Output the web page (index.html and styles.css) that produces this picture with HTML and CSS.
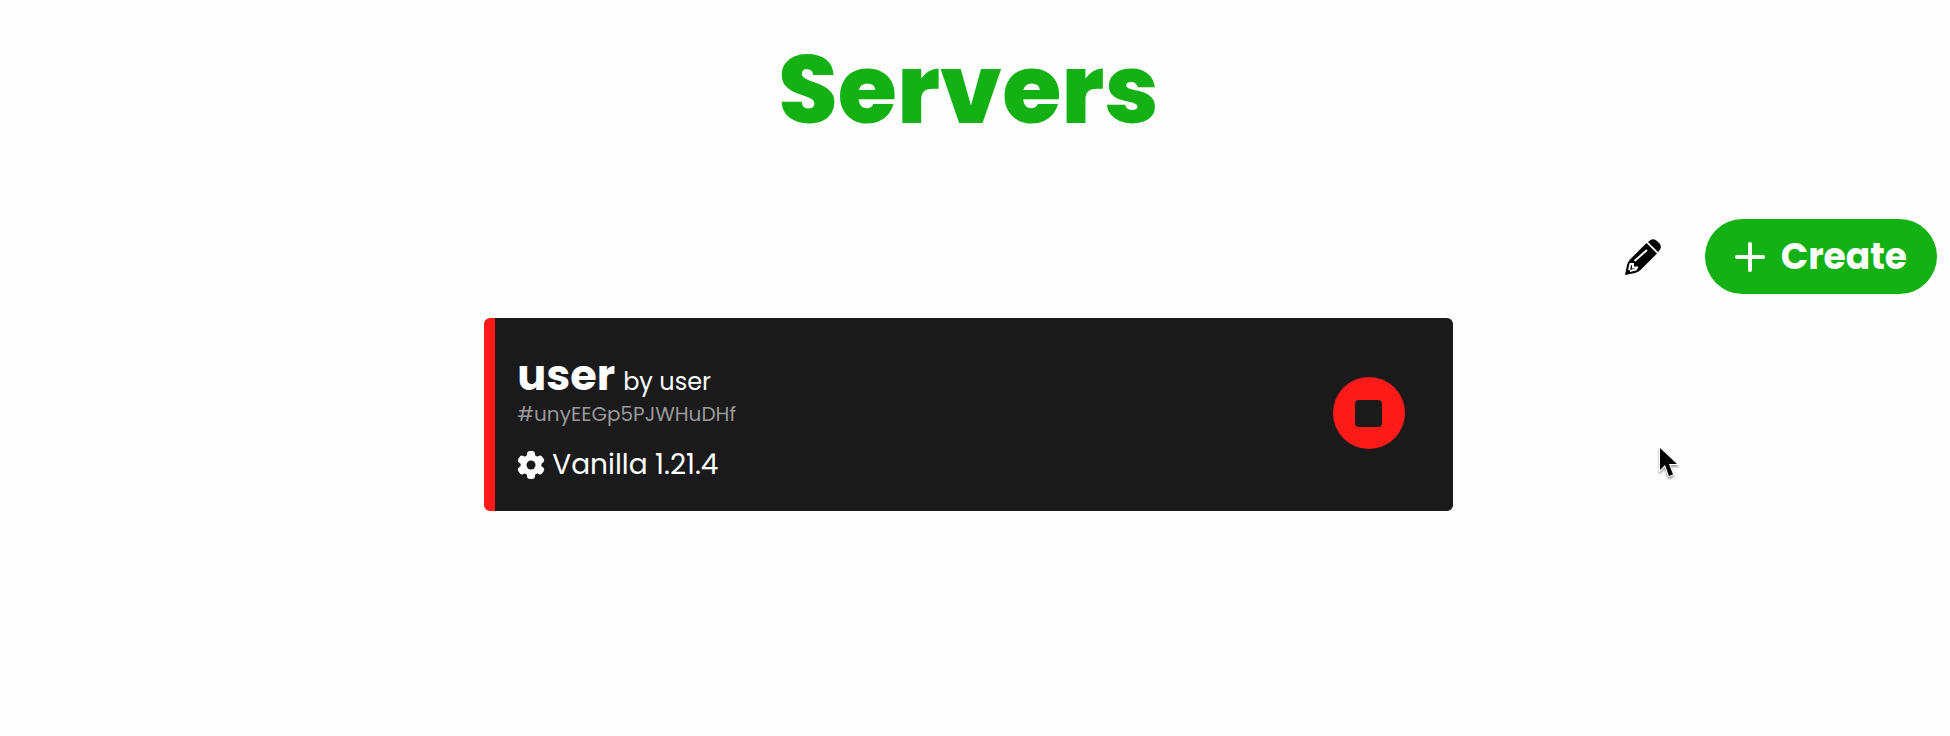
FILE: index.html
```html
<!DOCTYPE html>
<html lang="en">
<head>
    <meta charset="UTF-8">
    <meta name="viewport" content="width=device-width, initial-scale=1.0">
    <title>Servers</title>
    <link rel="stylesheet" href="styles.css">
</head>
<body>
    <h1 class="title">Servers</h1>

    <div class="toolbar">
        <button type="button" class="edit-btn" aria-label="Edit">
            <svg viewBox="0 0 36 36" width="36" height="36">
                <path d="M0 36 L2 26 Q3 22.500 5 20.500 L21.500 4 L32 14.500 L15.500 31 Q13.500 33 10 34 Z"/>
                <path d="M23 3 L25.500 1 Q29 -1 32 2 L34.500 4.500 Q37 8 35 10.500 L33 13 Z"/>
                <path class="cut" d="M9.500 22 L22 11"/>
                <path class="cut" d="M4 31 L5.500 25 L8 25 L8 28.500 L12 28.500 L11 30.500 L5 32"/>
            </svg>
        </button>
        <button type="button" class="create-btn">
            <svg viewBox="0 0 30 30" width="30" height="30">
                <path d="M15 2V28M2 15H28"/>
            </svg>
            <span>Create</span>
        </button>
    </div>

    <div class="server">
        <div class="server-info">
            <div class="server-heading">
                <h2 class="server-name">user</h2>
                <span class="server-owner">by user</span>
            </div>
            <p class="server-id">#unyEEGp5PJWHuDHf</p>
            <div class="server-version">
                <svg viewBox="0 0 28 28" width="28" height="28">
                    <g class="teeth">
                        <rect x="10" y="0" width="8" height="28" rx="3"/>
                        <rect x="10" y="0" width="8" height="28" rx="3" transform="rotate(60 14 14)"/>
                        <rect x="10" y="0" width="8" height="28" rx="3" transform="rotate(120 14 14)"/>
                        <circle cx="14" cy="14" r="10.500"/>
                    </g>
                    <circle class="hole" cx="14" cy="14" r="4.500"/>
                </svg>
                <span>Vanilla 1.21.4</span>
            </div>
        </div>
        <button type="button" class="stop-btn" aria-label="Stop server">
            <span class="stop-icon"></span>
        </button>
    </div>

    <svg class="pointer" viewBox="0 0 24 34" width="24" height="34">
        <path d="M2 2V24L7 19L11 30L15 28.500L11 18H19Z"/>
    </svg>
</body>
</html>
```

FILE: styles.css
```css
body {
    margin: 0;
    padding: 0 13px 0 0;
    background-color: #fdfdfd;
    font-family: Poppins, Inter, sans-serif;
    color: #fff;
}
h1, h2, p {
    margin: 0;
}
button {
    border: none;
    padding: 0;
    font-family: inherit;
    cursor: pointer;
}
.title {
    padding-top: 32px;
    font-size: 96px;
    line-height: 116px;
    font-weight: 800;
    text-align: center;
    color: #14b114;
}
.toolbar {
    display: flex;
    justify-content: flex-end;
    align-items: center;
    gap: 44px;
    margin-top: 71px;
}
.edit-btn {
    display: flex;
    background: none;
}
.edit-btn .cut {
    fill: none;
    stroke: #fdfdfd;
    stroke-width: 2;
}
.create-btn {
    display: flex;
    align-items: center;
    gap: 16px;
    height: 75px;
    padding: 0 30px;
    border-radius: 38px;
    background-color: #14b114;
    color: #fff;
    font-size: 36px;
    font-weight: 700;
}
.create-btn svg {
    stroke: #fff;
    stroke-width: 4;
    stroke-linecap: round;
}
.server {
    display: flex;
    justify-content: space-between;
    align-items: center;
    box-sizing: border-box;
    width: 50%;
    margin: 24px auto 0;
    padding: 31px 48px 28px 22px;
    border-left: 11px solid #ff1a1a;
    border-radius: 6px;
    background-color: #1a1a1a;
}
.server-heading {
    display: flex;
    align-items: baseline;
    gap: 8px;
}
.server-name {
    font-size: 43px;
    line-height: 52px;
    font-weight: 700;
}
.server-owner {
    font-size: 24px;
}
.server-id {
    font-size: 20px;
    line-height: 26px;
    color: #999;
}
.server-version {
    display: flex;
    align-items: center;
    gap: 7px;
    margin-top: 20px;
    font-size: 28px;
    line-height: 36px;
}
.teeth {
    fill: #fff;
}
.hole {
    fill: #1a1a1a;
}
.stop-btn {
    display: flex;
    align-items: center;
    justify-content: center;
    width: 72px;
    height: 72px;
    margin-bottom: 6px;
    border-radius: 50%;
    background-color: #ff1a1a;
}
.stop-icon {
    width: 27px;
    height: 27px;
    border-radius: 4px;
    background-color: #1a1a1a;
}
/* mouse pointer over the page */
.pointer {
    position: absolute;
    left: 85%;
    top: 446px;
    stroke: #fff;
    stroke-width: 2;
    paint-order: stroke;
    filter: drop-shadow(0 2px 1px rgba(0, 0, 0, 0.4));
}
```
